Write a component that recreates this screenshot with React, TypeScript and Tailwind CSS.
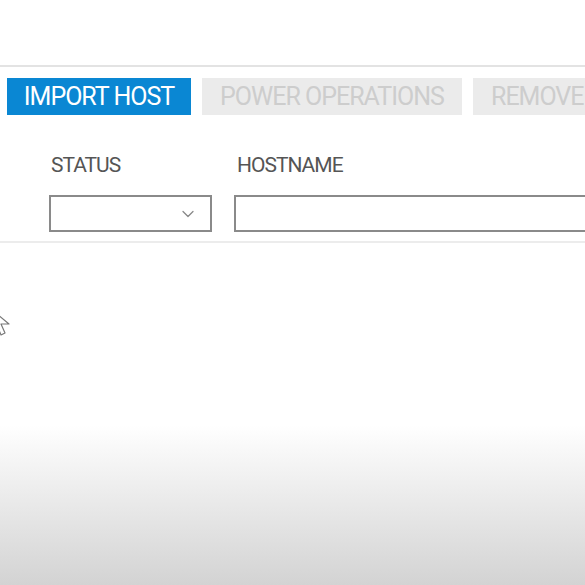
import { ChevronDown } from "lucide-react";

export default function App() {
  return (
    <div className="relative w-[585px] h-[585px] overflow-hidden bg-white font-['Roboto',sans-serif]">
      <div className="h-[65px]" />
      <div className="border-t-2 border-[#e3e3e3]" />
      <div className="flex gap-[11px] pl-[7px] pt-[11px] whitespace-nowrap">
        <button className="h-[37px] w-[184px] shrink-0 bg-[#0a87d3] text-white text-[25px] tracking-[-1px] leading-none">
          IMPORT HOST
        </button>
        <button className="h-[37px] w-[260px] shrink-0 bg-[#ebebeb] text-[#cdcdcd] text-[25px] tracking-[-1px] leading-none">
          POWER OPERATIONS
        </button>
        <button className="h-[37px] w-[160px] shrink-0 bg-[#ebebeb] text-[#cdcdcd] text-[25px] tracking-[-1px] leading-none text-left pl-[18px]">
          REMOVE
        </button>
      </div>
      <div className="flex gap-[22px] pl-[49px] pt-[40px]">
        <div className="flex flex-col w-[163px] shrink-0">
          <span className="text-[21px] text-[#555] tracking-[-1px] leading-none pl-[2px]">STATUS</span>
          <div className="mt-[19px] h-[37px] border-2 border-[#8a8a8a] flex items-center justify-end pr-[12px]">
            <ChevronDown className="w-[20px] h-[20px] text-[#888]" strokeWidth={1.5} />
          </div>
        </div>
        <div className="flex flex-col w-[400px] shrink-0">
          <span className="text-[21px] text-[#555] tracking-[-1px] leading-none pl-[3px]">HOSTNAME</span>
          <div className="mt-[19px] h-[37px] border-2 border-[#8a8a8a]" />
        </div>
      </div>
      <div className="mt-[9px] border-t-2 border-[#ececec]" />
      <svg className="absolute left-[-10px] top-[308px]" width="26" height="30" viewBox="0 0 26 30">
        <path d="M1 1 L1 22 L7 17 L11 27 L15 25 L11 16 L19 16 Z" fill="white" stroke="#777" strokeWidth="1.2" strokeLinejoin="round" />
      </svg>
      <div className="absolute left-0 right-0 top-[425px] bottom-0 bg-gradient-to-b from-white to-[#d3d3d3]" />
    </div>
  );
}
